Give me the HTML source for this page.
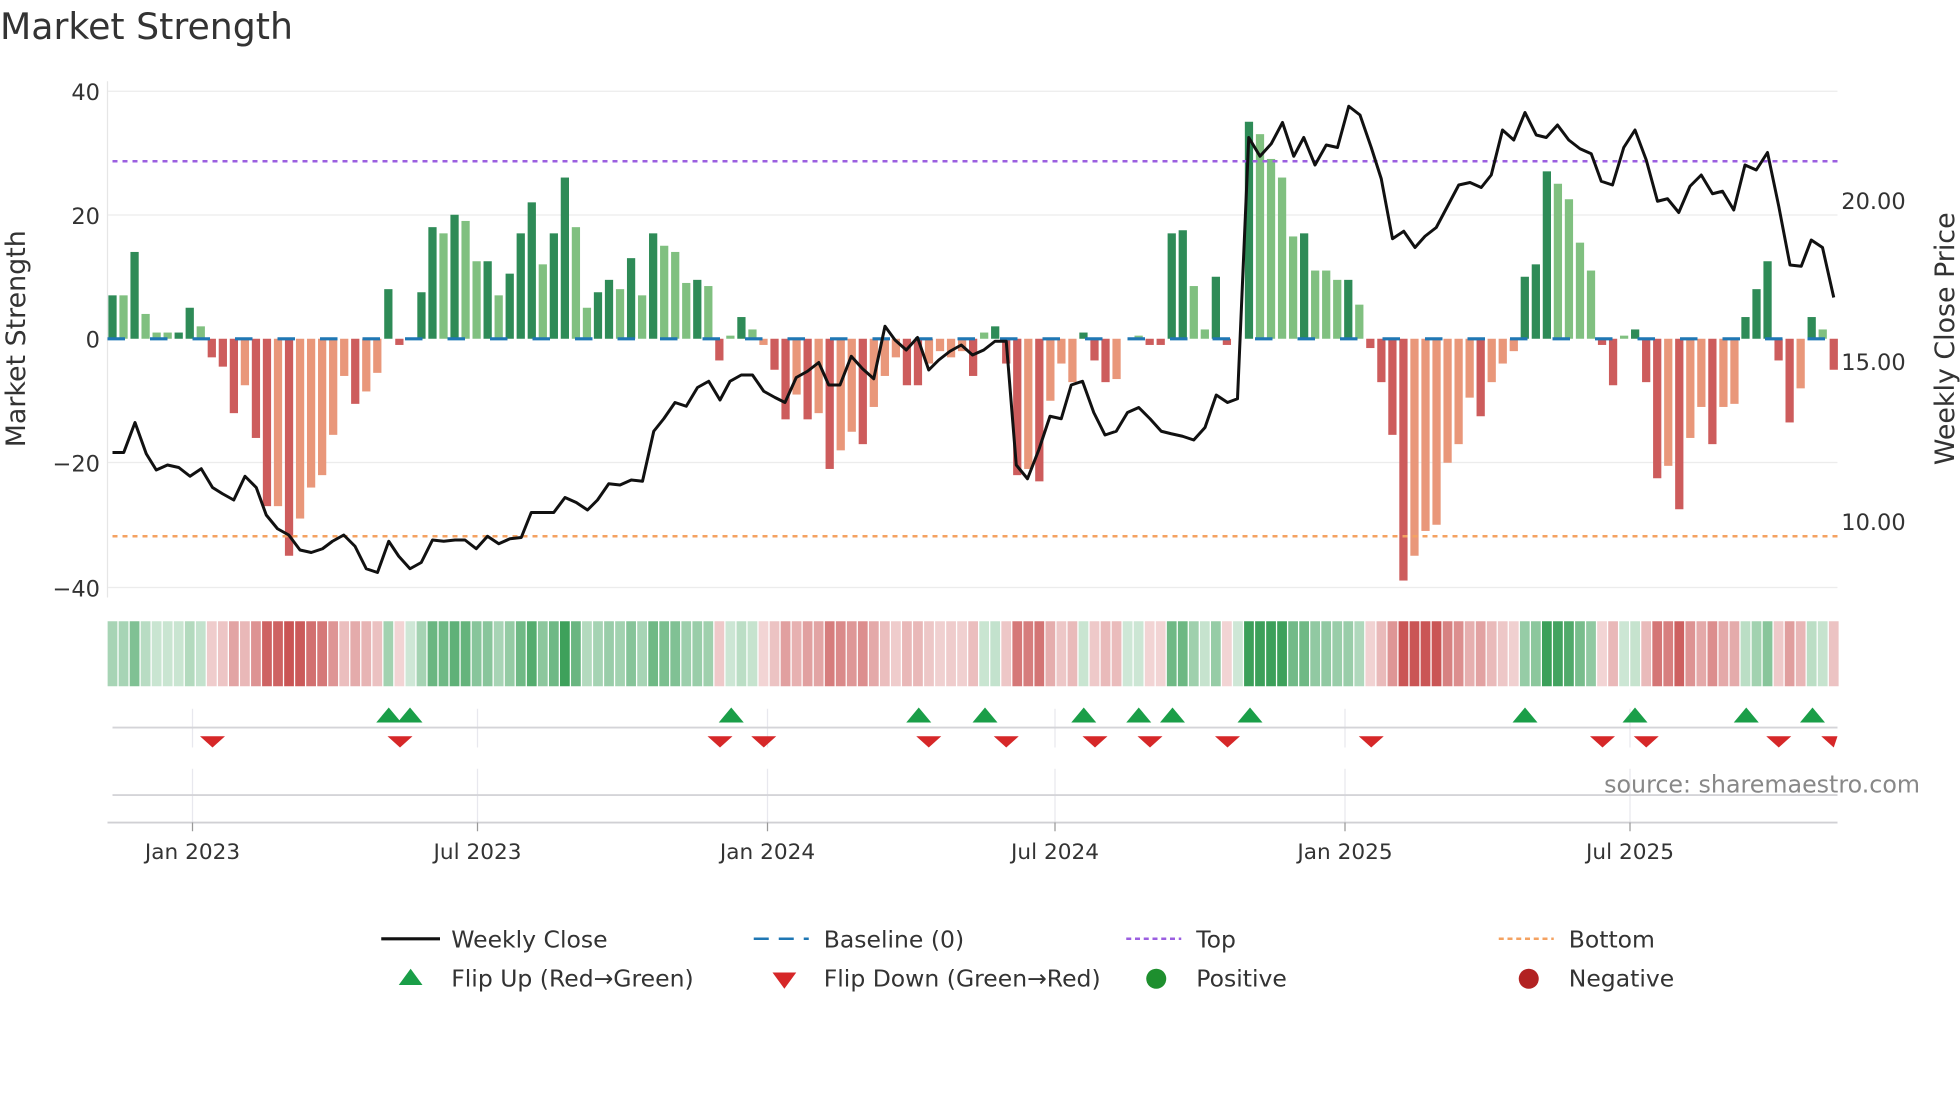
<!DOCTYPE html>
<html><head><meta charset="utf-8"><style>
html,body{margin:0;padding:0;background:#fff;}
svg{display:block;font-family:"DejaVu Sans","Liberation Sans",sans-serif;}
</style></head><body>
<svg id="s" width="1960" height="1102" viewBox="0 0 1568 881.6" xmlns="http://www.w3.org/2000/svg">
<rect width="1568" height="882" fill="#fff"/>
<text x="0" y="31" font-size="29" fill="#333">Market Strength</text>
<g stroke="#ececec" stroke-width="1">
<line x1="86" x2="1470" y1="73" y2="73"/><line x1="86" x2="1470" y1="172" y2="172"/>
<line x1="86" x2="1470" y1="370" y2="370"/><line x1="86" x2="1470" y1="470" y2="470"/>
</g>
<line x1="86" x2="86" y1="65" y2="478" stroke="#e6e6e6"/>
<g font-size="18" fill="#333" text-anchor="end">
<text x="80" y="80">40</text><text x="80" y="179">20</text><text x="80" y="278">0</text>
<text x="80" y="377">−20</text><text x="80" y="477">−40</text>
</g>
<g font-size="18" fill="#333">
<text x="1473" y="167">20.00</text><text x="1473" y="296">15.00</text><text x="1473" y="424">10.00</text>
</g>
<text transform="translate(20,271) rotate(-90)" font-size="21.5" fill="#333" text-anchor="middle">Market Strength</text>
<text transform="translate(1563,271) rotate(-90)" font-size="21.5" fill="#333" text-anchor="middle">Weekly Close Price</text>
<g id="bars"></g>
<line x1="86" x2="1470" y1="271" y2="271" stroke="#1f77b4" stroke-width="2.5" stroke-dasharray="14,20"/>
<line x1="90" x2="1470" y1="129" y2="129" stroke="#9b5fe0" stroke-width="2" stroke-dasharray="4,4"/>
<line x1="90" x2="1470" y1="429" y2="429" stroke="#f4a261" stroke-width="2" stroke-dasharray="4,4"/>
<polyline id="pl" fill="none" stroke="#111" stroke-width="2.4" stroke-linejoin="round"/>
<g id="heat"></g>
<g stroke="#e8e8ee" stroke-width="1" id="vg"></g>
<line x1="90" x2="1470" y1="582" y2="582" stroke="#d4d4d8" stroke-width="1.5"/>
<line x1="90" x2="1470" y1="636" y2="636" stroke="#d4d4d8" stroke-width="1.5"/>
<line x1="86" x2="1470" y1="658" y2="658" stroke="#d0d0d4" stroke-width="1.5"/>
<g id="flips"></g>
<text x="1536" y="634" font-size="19" fill="#888" text-anchor="end">source: sharemaestro.com</text>
<g font-size="17.3" fill="#333" text-anchor="middle" id="xt"></g>
<g font-size="18.8" fill="#333">
<line x1="305" x2="352" y1="751" y2="751" stroke="#111" stroke-width="2.5"/>
<text x="361" y="758">Weekly Close</text>
<line x1="603" x2="647" y1="751" y2="751" stroke="#1f77b4" stroke-width="2" stroke-dasharray="12,8"/>
<text x="659" y="758">Baseline (0)</text>
<line x1="901" x2="945" y1="751" y2="751" stroke="#9b5fe0" stroke-width="2" stroke-dasharray="4,3"/>
<text x="957" y="758">Top</text>
<line x1="1199" x2="1243" y1="751" y2="751" stroke="#f4a261" stroke-width="2" stroke-dasharray="4,3"/>
<text x="1255" y="758">Bottom</text>
<polygon points="319,788 338,788 328.5,775" fill="#1a9e48"/>
<text x="361" y="789">Flip Up (Red→Green)</text>
<polygon points="618,778 637,778 627.5,791" fill="#d62728"/>
<text x="659" y="789">Flip Down (Green→Red)</text>
<circle cx="925" cy="783" r="8" fill="#1e8f2e"/>
<text x="957" y="789">Positive</text>
<circle cx="1223" cy="783" r="8" fill="#b22222"/>
<text x="1255" y="789">Negative</text>
</g>
</svg>
<script>
var NS="http://www.w3.org/2000/svg";
function el(t,a,p){var e=document.createElementNS(NS,t);for(var k in a)e.setAttribute(k,a[k]);if(p)p.appendChild(e);return e;}
var d="7d 7l 14d 4l 1l 1l 1d 5d 2l -3r -4.5r -12r -7.5o -16r -27r -27o -35r -29o -24o -22o -15.5o -6o -10.5r -8.5o -5.5o 8d -1r 0l 7.5d 18d 17l 20d 19l 12.5l 12.5d 7l 10.5d 17d 22d 12l 17d 26d 18l 5l 7.5d 9.5d 8l 13d 7l 17d 15l 14l 9l 9.5d 8.5l -3.5r 0.5l 3.5d 1.5l -1o -5r -13r -9o -13r -12o -21r -18o -15o -17r -11o -6o -3o -7.5r -7.5r -4o -2o -3o -2o -6r 1l 2d -4r -22r -21o -23r -10o -4o -7o 1d -3.5r -7r -6.5o 0l 0.5l -1r -1r 17d 17.5d 8.5l 1.5l 10d -1r 0l 35d 33l 29l 26l 16.5l 17d 11l 11l 9.5l 9.5d 5.5l -1.5r -7r -15.5r -39r -35o -31o -30o -20o -17o -9.5o -12.5r -7o -4o -2o 10d 12d 27d 25l 22.5l 15.5l 11l -1r -7.5r 0.5l 1.5d -7r -22.5r -20.5o -27.5r -16o -11o -17r -11o -10.5o 3.5d 8d 12.5d -3.5r -13.5r -8o 3.5d 1.5l -5r".split(" ");
var col={d:"#2e8b57",l:"#80c080",r:"#cd5c5c",o:"#e9977a"};
var n=d.length,step=(1467-90)/(n-1);
var bars=document.getElementById("bars"),heat=document.getElementById("heat");
for(var i=0;i<n;i++){var v=parseFloat(d[i]),c=d[i].slice(-1),x=90+i*step,y=271-v*4.96;
 if(Math.abs(v)>0.2)el("rect",{x:x-3.3,y:Math.min(y,271),width:6.6,height:Math.abs(v)*4.96,fill:col[c]},bars);
 var hc;
 if(v>=0){hc="rgba(60,160,90,"+(0.25+Math.min(0.75,v/35))+")";}else{hc="rgba(200,80,80,"+(0.22+Math.min(0.75,-v/40))+")";}
 el("rect",{x:x-3.9,y:497,width:7.8,height:52,fill:hc},heat);}
var pts="90,362 99,362 108,338 117,363 125,376 134,372 143,374 152,381 161,375 170,390 178,395 187,400 196,381 205,390 213,412 222,423 231,428 240,440 249,442 258,439 266,433 275,428 284,437 293,455 302,458 311,433 319,445 328,455 337,450 346,432 355,433 364,432 372,432 381,439 390,429 399,435 408,431 417,430 425,410 434,410 443,410 452,398 461,402 470,408 478,400 487,387 496,388 505,384 514,385 523,345 531,335 540,322 549,325 558,310 567,305 576,320 584,305 593,300 602,300 611,313 620,318 628,322 637,302 646,297 655,290 663,308 672,308 681,285 690,295 699,303 708,261 716,272 725,280 734,270 743,296 751,288 760,281 769,276 778,284 787,280 796,273 805,273 813,372 822,383 831,360 840,333 849,335 857,308 866,305 875,330 884,348 893,345 902,330 911,326 920,335 929,345 937,347 946,349 955,352 964,342 973,316 982,322 990,319 999,110 1008,125 1017,115 1026,98 1035,125 1043,110 1052,132 1061,116 1070,118 1079,85 1088,92 1097,118 1105,143 1114,191 1123,185 1132,198 1140,189 1149,182 1158,165 1167,148 1176,146 1185,150 1193,140 1202,104 1211,112 1220,90 1229,108 1237,110 1246,100 1255,112 1264,119 1273,123 1281,145 1290,148 1299,118 1308,104 1317,128 1326,161 1334,159 1343,170 1352,149 1361,140 1370,155 1378,153 1387,168 1396,132 1405,136 1414,122 1423,165 1432,212 1441,213 1449,192 1458,198 1467,238";
document.getElementById("pl").setAttribute("points",pts);
var ticks=[[154,"Jan 2023"],[382,"Jul 2023"],[614,"Jan 2024"],[844,"Jul 2024"],[1076,"Jan 2025"],[1304,"Jul 2025"]];
var vg=document.getElementById("vg"),xt=document.getElementById("xt");
ticks.forEach(function(t){el("line",{x1:t[0],x2:t[0],y1:567,y2:598},vg);el("line",{x1:t[0],x2:t[0],y1:615,y2:658},vg);
 el("line",{x1:t[0],x2:t[0],y1:658,y2:665,stroke:"#999"},xt);var tx=el("text",{x:t[0],y:687},xt);tx.textContent=t[1];});
var fl=document.getElementById("flips");
[311,328,585,735,788,867,911,938,1000,1220,1308,1397,1450].forEach(function(x){el("polygon",{points:(x-10)+",578 "+(x+10)+",578 "+x+",566",fill:"#1a9e48"},fl);});
[170,320,576,611,743,805,876,920,982,1097,1282,1317,1423,1467].forEach(function(x){var x2=Math.min(x+10,1470);el("polygon",{points:(x-10)+",589 "+x2+",589 "+x+",598",fill:"#d62728"},fl);});
</script>
</body></html>
